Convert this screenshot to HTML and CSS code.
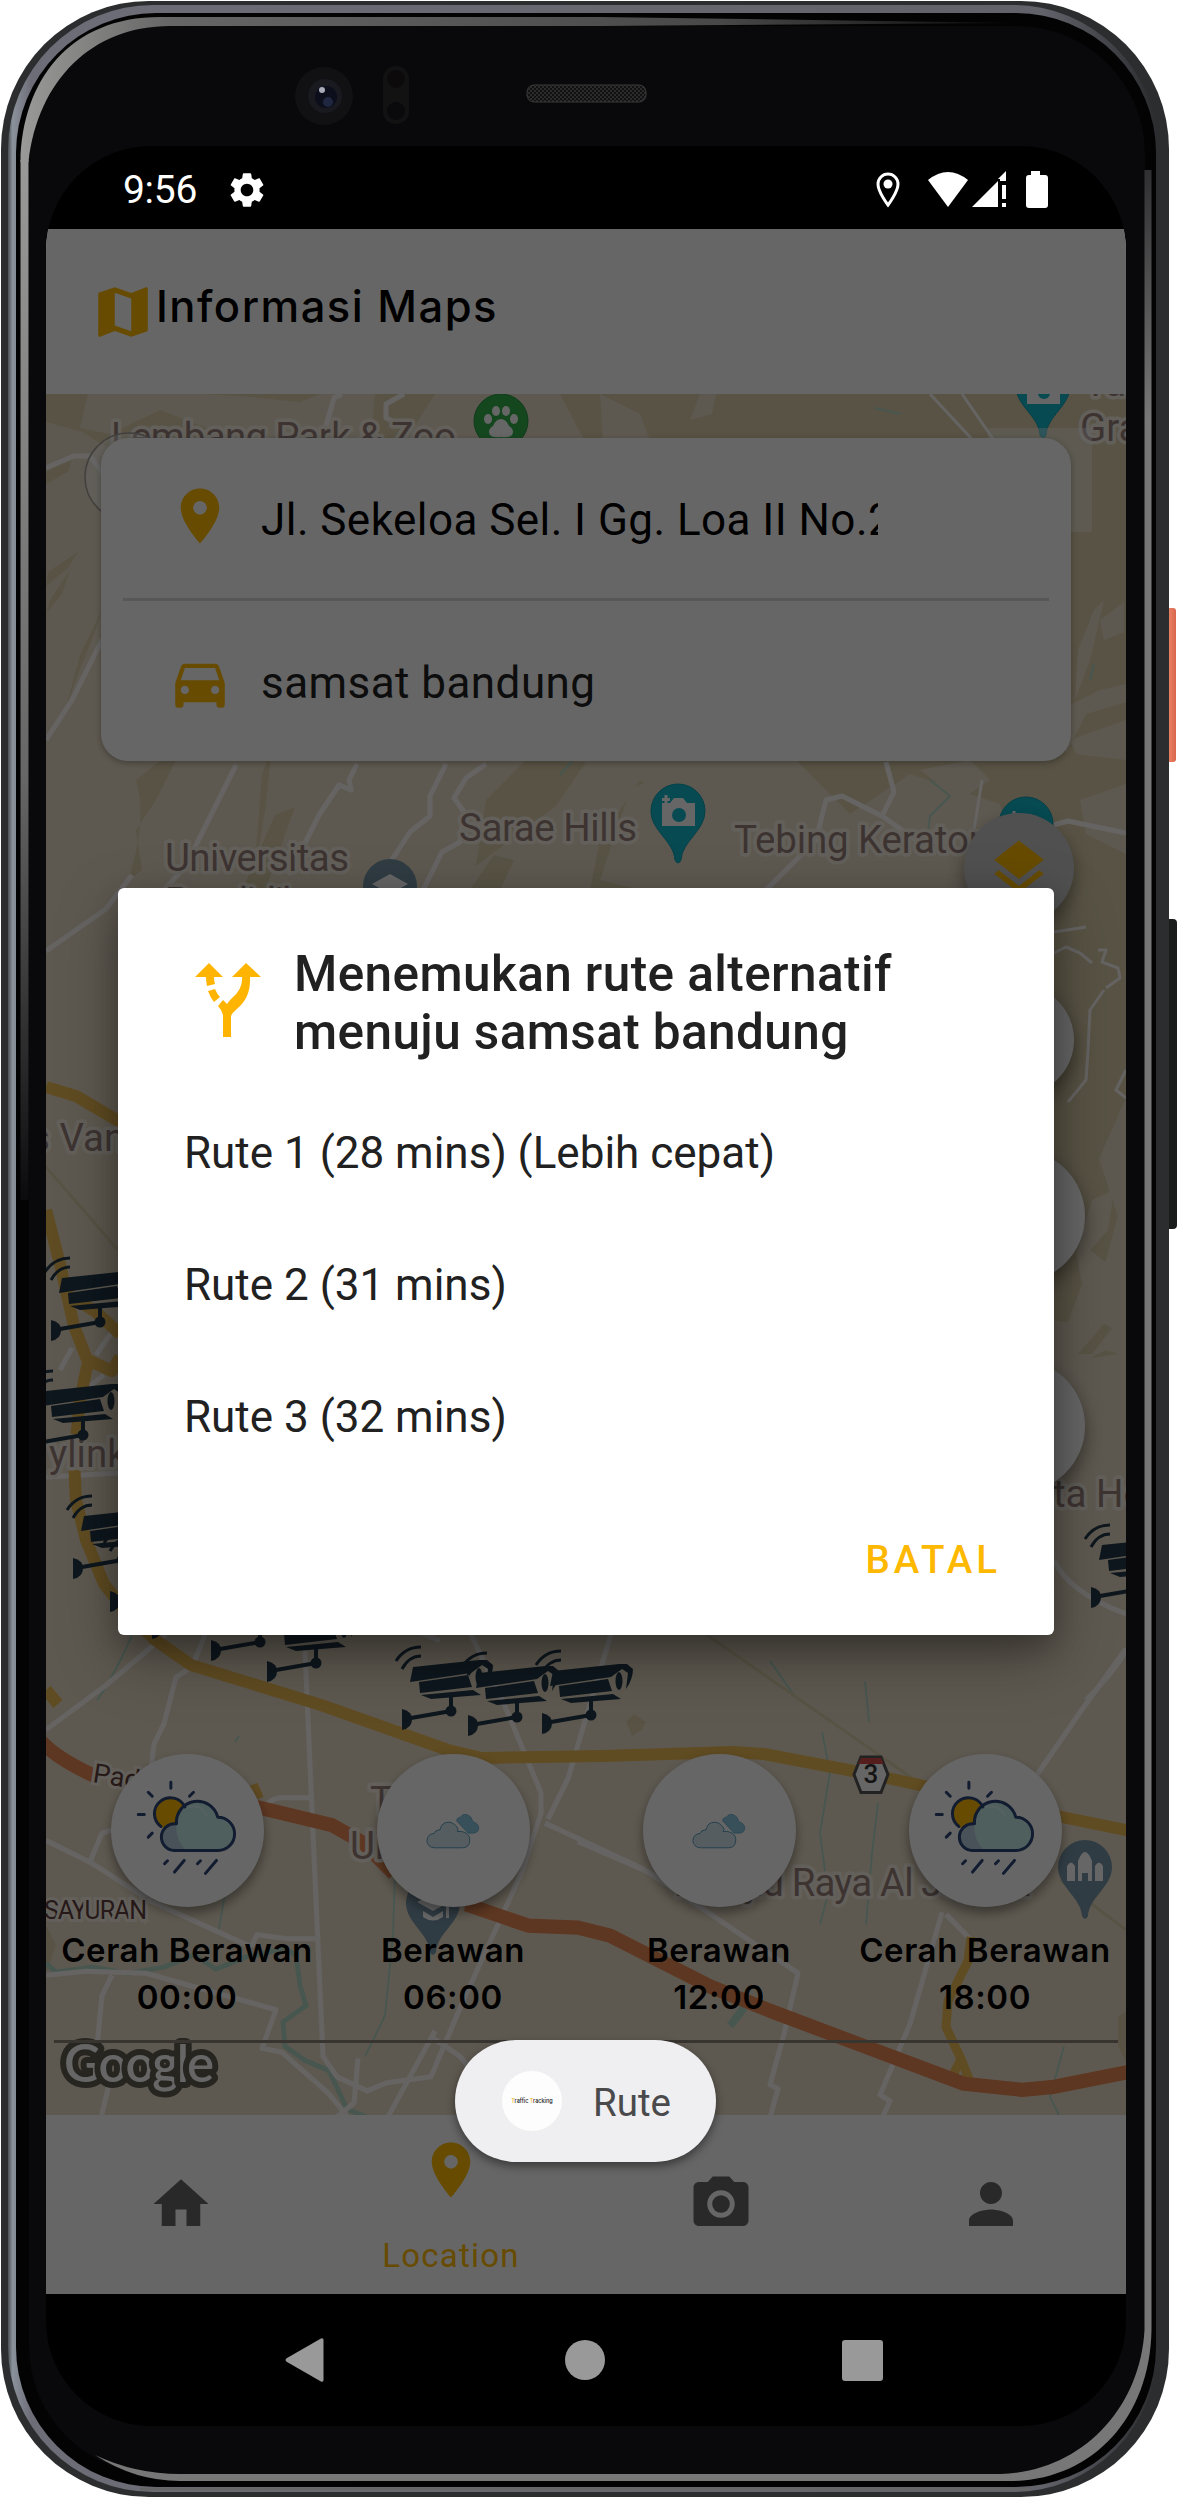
FILE: index.html
```html
<!DOCTYPE html>
<html lang="id">
<head>
<meta charset="utf-8">
<title>Informasi Maps</title>
<link rel="stylesheet" href="styles.css">
</head>
<body>
<svg class="defs" width="0" height="0" aria-hidden="true">
  <symbol id="i-place" viewBox="0 0 24 24"><path d="M12 2C8.13 2 5 5.13 5 9c0 5.25 7 13 7 13s7-7.75 7-13c0-3.87-3.13-7-7-7zm0 9.5a2.5 2.5 0 0 1 0-5 2.5 2.5 0 0 1 0 5z"/></symbol>
  <symbol id="i-car" viewBox="0 0 24 24"><path d="M18.92 6.01C18.72 5.42 18.16 5 17.5 5h-11c-.66 0-1.21.42-1.42 1.01L3 12v8c0 .55.45 1 1 1h1c.55 0 1-.45 1-1v-1h12v1c0 .55.45 1 1 1h1c.55 0 1-.45 1-1v-8l-2.08-5.99zM6.5 16c-.83 0-1.5-.67-1.5-1.5S5.67 13 6.5 13s1.5.67 1.5 1.5S7.330 16 6.500 16zm11 0c-.83 0-1.500-.67-1.500-1.500s.67-1.500 1.500-1.500 1.500.67 1.500 1.500-.67 1.500-1.500 1.500zM5 11l1.500-4.500h11L19 11H5z"/></symbol>
  <symbol id="i-home" viewBox="0 0 24 24"><path d="M10 20v-6h4v6h5v-8h3L12 3 2 12h3v8z"/></symbol>
  <symbol id="i-camera" viewBox="0 0 24 24"><circle cx="12" cy="12" r="3.200"/><path d="M9 2L7.170 4H4c-1.100 0-2 .9-2 2v12c0 1.100.9 2 2 2h16c1.100 0 2-.9 2-2V6c0-1.100-.9-2-2-2h-3.170L15 2H9zm3 15c-2.760 0-5-2.240-5-5s2.240-5 5-5 5 2.240 5 5-2.240 5-5 5z"/></symbol>
  <symbol id="i-person" viewBox="0 0 24 24"><path d="M12 12c2.210 0 4-1.790 4-4s-1.790-4-4-4-4 1.790-4 4 1.790 4 4 4zm0 2c-2.670 0-8 1.340-8 4v2h16v-2c0-2.660-5.330-4-8-4z"/></symbol>
  <symbol id="i-gear" viewBox="0 0 24 24"><path d="M19.140 12.940c.04-.3.06-.61.06-.94 0-.32-.02-.64-.07-.94l2.030-1.580c.18-.14.23-.41.12-.61l-1.920-3.320c-.12-.22-.37-.29-.59-.22l-2.390.96c-.5-.38-1.030-.7-1.620-.94l-.36-2.540c-.04-.24-.24-.41-.48-.41h-3.840c-.24 0-.43.17-.47.41l-.36 2.540c-.59.24-1.130.57-1.620.94l-2.390-.96c-.22-.08-.47 0-.59.22L2.740 8.870c-.12.21-.08.47.12.61l2.030 1.580c-.05.3-.09.63-.09.94s.02.64.07.94l-2.030 1.580c-.18.14-.23.41-.12.61l1.920 3.320c.12.22.37.29.59.22l2.390-.96c.5.38 1.030.7 1.620.94l.36 2.540c.05.24.24.41.48.41h3.840c.24 0 .44-.17.47-.41l.36-2.540c.59-.24 1.130-.56 1.620-.94l2.390.96c.22.08.47 0 .59-.22l1.920-3.320c.12-.22.07-.47-.12-.61l-2.010-1.580zM12 15.600c-1.980 0-3.600-1.620-3.600-3.600s1.620-3.600 3.600-3.600 3.600 1.620 3.600 3.600-1.620 3.600-3.600 3.600z"/></symbol>
  <symbol id="i-map" viewBox="0 0 24 24"><path d="M20.500 3l-.16.03L15 5.100 9 3 3.360 4.900c-.21.07-.36.25-.36.48V20.500c0 .28.22.5.5.5l.16-.03L9 18.900l6 2.100 5.640-1.900c.21-.07.36-.25.36-.48V3.500c0-.28-.22-.5-.5-.5zM15 19l-6-2.110V5l6 2.110V19z"/></symbol>
  <symbol id="i-layers" viewBox="0 0 24 24"><path d="M11.990 18.540l-7.370-5.730L3 14.070l9 7 9-7-1.630-1.270-7.380 5.740zM12 16l7.360-5.730L21 9l-9-7-9 7 1.630 1.270L12 16z"/></symbol>
  <symbol id="i-weather-rain" viewBox="0 0 460 460">
    <g fill="none" stroke="#2d4678" stroke-width="9" stroke-linecap="round"><path d="M180 85v18M112 115l12 12M248 115l-12 12M82 182h18M112 250l12-12"/></g>
    <circle cx="178" cy="179" r="48" fill="#ffbb00"/>
    <path d="M216 150a48 48 0 0 1-52 75q30-8 32-45z" fill="#e0a500"/>
    <path d="M190 290a40 40 0 0 1 3-80h4a63 63 0 0 1 124-20 50 50 0 0 1 1 100z" fill="#c6eeec"/>
    <path d="M190 290a40 40 0 0 1 3-80h3q-2 50 30 80z" fill="#b5cddb"/>
    <path d="M226 162q40-18 64 26M318 190q24 4 35 20" fill="none" stroke="#d6f5f4" stroke-width="6"/>
    <g fill="none" stroke="#2d4678" stroke-width="9" stroke-linecap="round" stroke-linejoin="round">
      <path d="M222 159A48 48 0 1 0 150 218"/>
      <path d="M190 290a40 40 0 0 1 3-80h4a63 63 0 0 1 124-20 50 50 0 0 1 1 100z"/>
      <path d="M161 330l9-9M191 355l29-35M260 330l9-9M284 359l33-39"/>
    </g>
  </symbol>
  <symbol id="i-weather-cloud" viewBox="0 0 460 460">
    <path d="M240 202q-2-10 10-12 10-14 26-5 9 4 12 18 18 6 18 20-2 15-18 15h-14z" fill="#8cc9e2" stroke="#3f90b5" stroke-width="1.500"/>
    <path d="M172 282a22 22 0 0 1-22-22q2-20 22-21 0-9 18-12 4-22 26-22 20 2 28 22l-3 6q12-2 24 3 14 7 14 22 0 24-22 24z" fill="#d8e9f1" stroke="#3f90b5" stroke-width="2.500"/>
  </symbol>
</svg>

<main class="phone">
  <svg class="chassis" viewBox="0 0 1178 2498" aria-hidden="true">
    <defs>
      <linearGradient id="rim" x1="0" x2="1" y1="0" y2="0">
        <stop offset="0" stop-color="#4c5156"/><stop offset=".004" stop-color="#8b929b"/><stop offset=".02" stop-color="#6d6d78"/><stop offset=".9" stop-color="#62626a"/><stop offset="1" stop-color="#2a2c2f"/>
      </linearGradient>
      <linearGradient id="glare" gradientUnits="userSpaceOnUse" x1="20" y1="0" x2="1020" y2="0">
        <stop offset="0" stop-color="#9a9a98"/><stop offset=".15" stop-color="#666"/><stop offset=".7" stop-color="#484848"/><stop offset="1" stop-color="#0a0a0c"/>
      </linearGradient>
      <linearGradient id="glare-side" gradientUnits="userSpaceOnUse" x1="0" y1="150" x2="0" y2="1200">
        <stop offset="0" stop-color="#9a9a98"/><stop offset=".6" stop-color="#666"/><stop offset="1" stop-color="#0b0b0d"/>
      </linearGradient>
      <linearGradient id="glare-right" gradientUnits="userSpaceOnUse" x1="0" y1="150" x2="0" y2="420">
        <stop offset="0" stop-color="#2a2a2c"/><stop offset="1" stop-color="#777"/>
      </linearGradient>
      <linearGradient id="power" x1="0" x2="1"><stop offset="0" stop-color="#d9654b"/><stop offset=".4" stop-color="#f08a6c"/><stop offset="1" stop-color="#d8664c"/></linearGradient>
      <pattern id="mesh" width="4" height="4" patternUnits="userSpaceOnUse"><rect width="4" height="4" fill="#111"/><circle cx="1" cy="1" r="1" fill="#333"/><circle cx="3" cy="3" r="1" fill="#333"/></pattern>
    </defs>
    <rect x="1160" y="608" width="16" height="154" rx="3" fill="url(#power)"/>
    <rect x="1160" y="919" width="17" height="310" rx="4" fill="#1a1b1b"/>
    <rect x="1" y="1" width="1168" height="2496" rx="148" fill="#2b2d2e"/>
    <rect x="8" y="5" width="1150" height="2487" rx="145" fill="url(#rim)"/>
    <rect x="16" y="13" width="1140" height="2474" rx="140" fill="#030304"/>
    <path d="M140 2489H1030" stroke="#666" stroke-width="3" fill="none"/>
    <rect x="29" y="26" width="1116" height="2448" rx="128" fill="#09090b"/>
    <path d="M24.500 1200V160" stroke="url(#glare-side)" stroke-width="8" fill="none"/>
    <path d="M20.500 162C22 80 70 17 160 17H600L1015 23L600 26H170C92 26 38 80 28.500 162z" fill="url(#glare)"/>
    <rect x="1144.500" y="170" width="7" height="2160" fill="url(#glare-right)"/>
    <path d="M1151.500 2330C1150 2420 1090 2481 1010 2481H180Q135 2481 95 2455Q135 2474 180 2474H1000C1080 2472 1140 2410 1144.500 2330z" fill="#777"/>
    <circle cx="324" cy="96" r="29" fill="#111113"/><circle cx="325" cy="96" r="17" fill="#191a20"/><circle cx="326" cy="97" r="11" fill="#0c0e1c"/><circle cx="328" cy="102" r="5" fill="#1f2740"/><circle cx="322" cy="90" r="3" fill="#a9acb9"/>
    <rect x="383" y="66" width="26" height="58" rx="13" fill="#121213"/><circle cx="396" cy="79" r="9" fill="#0c0a0b"/><circle cx="396" cy="111" r="9" fill="#0a0a0c"/>
    <rect x="527" y="85" width="119" height="17" rx="7" fill="url(#mesh)" stroke="#3b3b3b"/>
  </svg>

  <div class="screen">
    <div class="status">
      <span class="clock">9:56</span>
      <svg class="status-gear"><use href="#i-gear"/></svg>
      <svg class="status-icons" viewBox="0 0 176 40" aria-hidden="true">
        <g fill="#fff">
          <path d="M12 4C6.500 4 2 8.500 2 14c0 8 10 21 10 21s10-13 10-21C22 8.500 17.500 4 12 4z" fill="none" stroke="#fff" stroke-width="3"/><circle cx="12" cy="14" r="4.500"/>
          <path d="M52 10Q72-6 92 10L72 37z"/>
          <path d="M96 37L122 11V37zM122 9L130 1V11H124V9z"/><path d="M126 15h4v14h-4zM126 33h4v4h-4z"/>
          <path d="M155 1h9v4h5q3 0 3 3v27q0 3-3 3h-16q-3 0-3-3V8q0-3 3-3h2z"/>
        </g>
      </svg>
    </div>

    <div class="app">
      <header class="appbar">
        <svg class="appbar-icon"><use href="#i-map"/></svg>
        <h1>Informasi Maps</h1>
      </header>

      <section class="map">
        <svg class="map-canvas" viewBox="46 394 1080 1721" aria-hidden="true">
          <defs>
            <g id="cctv">
              <path d="M0-15V0L-40 7" fill="none" stroke="#233a4b" stroke-width="4"/>
              <circle r="5.500"/><path d="M-49-2Q-39 0-39 8.500T-49 19z"/>
              <path d="M-38-44L28-51 36-51 42-46Q42-36 35-26L37-42 31-46 20-38-41-29z"/>
              <path d="M-32-29L17-36 21-24-31-18z"/><path d="M-30-16L22-21 30-16-20-12z"/>
              <ellipse cx="28" cy="-34" rx="3.500" ry="9"/>
              <path d="M-55-50Q-46-64-30-64M-49-42Q-42-55-30-55" fill="none" stroke="#233a4b" stroke-width="3"/>
            </g>
            <path id="pin" d="M0-27A27 27 0 0 0-27 0C-27 20-4 30-3 49Q0 55 3 49C4 30 27 20 27 0A27 27 0 0 0 0-27z"/>
            <g id="shot" fill="#fff"><path d="M-16-8H-8L-4-13H5L9-8H17V15H-16z"/><path d="M-16-13h8v3h-8zM-13.500-16h3v9h-3z"/></g>
          </defs>
          <rect x="46" y="394" width="1080" height="1721" fill="#ebdfc9"/>
          <g fill="#dccfab">
            <path d="M46 394h42l-8 34 30 6 50-24 62 24-20 26-80-4-40-24-36-10zM200 394h120l-20 8-60-6zM375 394h60l-35 55-30 4zM560 394h566v500h-46l-60-20-20-70-90-30-60 40-60-60-130-14 20-150-20-100-60-20z"/>
            <path d="M46 472l26-14-4 14-22 12zM48 572l30-20-10 16-22 18zM50 600l20-30-8 24-16 20zM92 640l10-30-22 45-16 60 12-36zM128 880q20-60 8-100l50-40-30 60-20 30 6 40zM240 895l35-80 20-8-30 84zM262 775l10-30-6 60-12 70zM470 890l24-35 20 5-16 34zM486 800l40-40 60 2-30 44-80 60zM590 890l10-50 40-60 20 20-30 90z"/>
            <path d="M1050 888h76v210l-40 90-32 20zM1054 1200l30-20 14-24 20 60-30 110-34-6zM1078 1354l26-30 8 4-20 26zM1090 1358l16-8 12 4z"/>
            <path d="M626 1722l8-8 12 8-4 8-10 6zM46 1925l10 20-8 24-2 2zM1118 2016l8-4v50l-8-16z"/>
          </g>
          <g fill="#ebdfc9">
            <path d="M600 394l40 20 14 36-50 6zM700 394l-10 26 22-6 4-20zM1078 650l16-40 10-10-14 60-15 40zM1100 620l24-18v30l-20 8zM1060 710l40-20 26-6v18l-40 12-20 40zM1070 740l56-20v40l-50-6zM920 770l50-10 20 20-30 20zM1080 800l46-16v70l-40-20zM600 880l30-90 40-20-20 60-10 60zM800 875l60-60 30 10-20 60z"/>
            <path d="M1092 1200l22-10-6 40-18 20 18 14-14 50-24 40-10-10 22-60-6-30z"/>
          </g>
          <g fill="none" stroke="#b5d8c9" stroke-width="3">
            <path d="M930 780l20 16-20 20-4 30 16 10M560 775l12-14M1090 680l4-16M875 408l25 6" stroke-width="2"/>
            <g transform="translate(0 -22.720) scale(1 1.014200)">
              <path d="M132 1635q-18 40-35 64M235 1740l4-6M770 1660l24 34M865 1680l4 40M822 1730l8 40-10 60 8 60-8 30M878 1800l-6 50-6 70M395 1870l-2 60-8 80-20 40M230 1860l-12 70M1064 2040l-14 50 10 20" stroke-width="2"/>
              <path d="M46 1958l10 9 36-5 36 6 36-6 30-12 22 14 30-12 38-8 12 6 4 30 6 20-23 16 2 24 20 14 24 10 18 38 30 12" stroke-width="5"/>
              <path d="M744 2002l-14 18" stroke-width="8"/>
            </g>
          </g>
          <g fill="none" stroke="#fdfaf8" stroke-width="5" stroke-linejoin="round">
            <path d="M46 468l28-12h16l12 16 14 26M102 640l-30 60-26 40M46 951l60-42 26-34M342 394l-8 4-12 42M404 394l-18 10v14l24 10M236 765l-20 40-30 60-60 70M357 764l-8 16 2 10-12-5-20 30-30 60M446 764l-16 32v20l-20 16-26 40 4 14-20 28M486 764l-20 14-12 20 10 14-4 30-18 10-20 40"/>
            <path d="M886 762l8 30-12 24-40-20-16 4-10 40-30 30-20 20M882 816l34 24 20 4M1018 835l50-14 58 12"/>
            <path d="M930 394l52 56M962 394l36 52M982 780l-8 50" stroke-width="3"/>
            <g transform="translate(0 -22.720) scale(1 1.014200)">
              <path d="M46 1728l60-44 60-50M206 1632l-14 34-16 10-12 46-10 20-6 50M46 1837l45 22 60 38 100 45M312 1795h-30q-14 0-24 18M138 1818l-36 12-12 28M251 1942l6-12 30 4h30M305 1650l8 180 10 220 14 20 30 14 20-8 44-6 30-70 60-130 20-60v-20l-38-90-38-78-22-4-20-12"/>
              <path d="M545 1820l100 46M548 1816l20-40 30-100 28-90 20-30M46 1970l40-4 60 2 130 36-14 38 20 4 46 40 20 24-28 40M358 2052l-4 44-20 16M435 2025l-50 90M430 2030l30 20 20 24M112 1970l-10 20-6 60 14 24-10 40M440 1640l-20-8-60-14"/>
              <path d="M578 1838l70 30 60 40 90 60-14 60-14 50 8 4-10 36M1126 1648l-44 60-56 80-10 20M942 1908l-32 110-30 70 10 6-14 30M946 1910l24 24"/>
            </g>
            <path d="M1054 1560q14 32 72 54M1126 1650q-10 20-40 50M78 1395l26-20M46 1477l72-4M96 1355l18-26M60 1370l12-22"/>
            <path d="M1054 932l32-5M1054 953l12-6 14 6 12 10M1098 950h8l-4 12 16 6 2 10-14 10M1104 990l-14 20-2 40-2 30-18 22M1126 1070l-10 20 10 8" stroke-width="3"/>
          </g>
          <path d="M118 1250L40 1160M700 1630l222 155M1060 1880l66 50" fill="none" stroke="#ddd2ac" stroke-width="3"/>
          <g fill="none" stroke-linejoin="round">
            <g stroke="#f0bd55" stroke-width="12">
              <path d="M46 1087l30 9 44 26M46 1210l14 54 14 62 14 36-8 38-6 60 2 40 10 40 18 44 24 30 26 25 37 26 130 40 127 45 34 8 120-2 131-4 31 2 100 19 60 13 138 31 68 14M70 1296l26 16 24 22M88 1360l24 11 8-14M46 1690l12 14M252 1785l6 14"/>
              <path d="M971 1937l-3 24-20 40-2 26 15 32-9 18M961 2059l8 20" stroke-width="9"/>
            </g>
            <path transform="translate(0 -22.720) scale(1 1.014200)" d="M40 1738q15 18 60 38M200 1795l56 9 76 18 32 18 30 30M466 1900l62 21 50 2 32 8 100 50 60 24 194 72 58 6 32-3 76-15" stroke="#e98a55" stroke-width="14"/>
          </g>
          <g class="poi">
            <text x="111" y="450" textLength="345">Lembang Park &amp; Zoo</text>
            <text x="165" y="871" textLength="184">Universitas</text>
            <text x="165" y="915" textLength="176">Pendidikan</text>
            <text x="459" y="841" textLength="178">Sarae Hills</text>
            <text x="734" y="853" textLength="256">Tebing Keraton</text>
            <text x="1084" y="396">Tama</text>
            <text x="1080" y="441">Grafika</text>
            <text x="30" y="1151">s Vanda</text>
            <text x="49" y="1467">ylink</text>
            <text x="1053" y="1507">ta Hotel</text>
            <text x="370" y="1814">Telkom</text>
            <text x="350" y="1859">University</text>
            <text x="674" y="1896" textLength="362">Masjid Raya Al Jabbar</text>
          </g>
          <g class="area"><text x="44" y="1919" textLength="103">SAYURAN</text><text x="92" y="1782" transform="rotate(9 92 1782)" font-size="27">Pad</text></g>
          <g fill="#12b9cd" stroke="#0c9fb4" stroke-width="1">
            <use href="#pin" x="678" y="811"/><use href="#pin" x="1043" y="386"/><use href="#pin" x="1026" y="824"/>
          </g>
          <use href="#shot" x="678" y="811"/><circle cx="679" cy="815" r="7" fill="#12b9cd"/>
          <use href="#shot" x="1043" y="389"/><circle cx="1044" cy="393" r="6" fill="#12b9cd"/>
          <use href="#shot" x="1026" y="827"/>
          <circle cx="501" cy="421" r="27" fill="#35b24e" stroke="#239240"/>
          <g fill="#fff"><ellipse cx="488" cy="419" rx="4" ry="5"/><ellipse cx="496" cy="411" rx="4" ry="5"/><ellipse cx="506" cy="411" rx="4" ry="5"/><ellipse cx="514" cy="419" rx="4" ry="5"/><path d="M501 419q5 0 8 7 6 4 3 9-3 3-11 2-8 1-11-2-3-5 3-9 3-7 8-7z"/></g>
          <g fill="#7896a8"><use href="#pin" x="390" y="886"/><use href="#pin" x="433" y="1903"/><use href="#pin" x="1085" y="1867"/></g>
          <g fill="#fff"><path d="M390 874l18 10-18 10-18-10zM433 1894l16 8-16 9-16-9z"/><path d="M423 1911l10 6 10-6v6q-10 7-20 0zM446 1902h3v16h-3z"/>
          <path d="M1067 1881v-15q4-7 8 0v15zM1095 1881v-15q4-7 8 0v15zM1078 1881v-20q7-18 14 0v20h-4v-8h-6v8z"/></g>
          <path d="M861 1757h20l7 17.500-7 18h-20l-7-18z" fill="#fff" stroke="#555" stroke-width="3"/><path d="M861 1758h20l3 6h-26z" fill="#d84a4a"/>
          <text x="871" y="1783" class="shield">3</text>
          <g fill="#233a4b">
            <use href="#cctv" x="100" y="1322"/><use href="#cctv" x="83" y="1435"/><use href="#cctv" x="122" y="1560"/><use href="#cctv" x="159" y="1593"/><use href="#cctv" x="201" y="1620"/><use href="#cctv" x="260" y="1642"/><use href="#cctv" x="316" y="1663"/><use href="#cctv" x="451" y="1711"/><use href="#cctv" x="517" y="1717"/><use href="#cctv" x="591" y="1715"/><use href="#cctv" x="1140" y="1589"/>
          </g>
          <circle cx="129" cy="477" r="44" fill="#fff" fill-opacity=".4" stroke="#a5a29b" stroke-width="1.500"/>
          <rect x="988" y="428" width="104" height="104" rx="3" fill="#fff" fill-opacity=".4"/>
          <text x="64" y="2082" textLength="150" class="brand">Google</text>
        </svg>

        <div class="fabs">
          <span class="fab fab-grey"><svg><use href="#i-layers"/></svg></span>
          <span class="fab"></span>
          <span class="fab fab-lg"></span>
          <span class="fab fab-lg fab-last"></span>
        </div>

        <div class="search">
          <div class="search-row"><svg><use href="#i-place"/></svg><span class="search-text">Jl. Sekeloa Sel. I Gg. Loa II No.23</span></div>
          <div class="search-row search-row-to"><svg><use href="#i-car"/></svg><span class="search-text search-text-to">samsat bandung</span></div>
        </div>

        <div class="weather">
          <div class="hour"><span class="disc"><svg><use href="#i-weather-rain"/></svg></span><span>Cerah Berawan</span><span>00:00</span></div>
          <div class="hour"><span class="disc"><svg><use href="#i-weather-cloud"/></svg></span><span>Berawan</span><span>06:00</span></div>
          <div class="hour"><span class="disc"><svg><use href="#i-weather-cloud"/></svg></span><span>Berawan</span><span>12:00</span></div>
          <div class="hour"><span class="disc"><svg><use href="#i-weather-rain"/></svg></span><span>Cerah Berawan</span><span>18:00</span></div>
        </div>
      </section>

      <nav class="tabs">
        <span class="tab"><svg><use href="#i-home"/></svg></span>
        <span class="tab tab-active"><svg><use href="#i-place"/></svg><span>Location</span></span>
        <span class="tab"><svg><use href="#i-camera"/></svg></span>
        <span class="tab"><svg><use href="#i-person"/></svg></span>
      </nav>

      <div class="scrim">
        <section class="dialog">
          <div class="dialog-head">
            <svg class="dialog-icon" viewBox="0 0 66 74" aria-hidden="true">
              <path d="M0 14L14 0l14 14h-9q0 4 1 7l-8 2q-1-5-1-9zM37 14L51 0l15 14H55q1 20-12 31-6 5-7 8v21h-8V52q-1-5-5-9l5-6 4 4q2-3 5-6 11-9 10-21zM13 28l7-2q2 5 5 8l-6 5q-4-5-6-11z" fill="#ffb400"/>
            </svg>
            <h2>Menemukan rute alternatif<br>menuju samsat bandung</h2>
          </div>
          <ul class="routes">
            <li>Rute 1 (28 mins) (Lebih cepat)</li>
            <li>Rute 2 (31 mins)</li>
            <li>Rute 3 (32 mins)</li>
          </ul>
          <button class="cancel">BATAL</button>
        </section>
      </div>

      <div class="toast">
        <span class="toast-logo"><span><i>T</i>raffic <i>T</i>racking</span></span>
        <span class="toast-text">Rute</span>
      </div>
    </div>

    <div class="sysnav">
      <svg viewBox="0 0 39 46" width="39" height="46"><path d="M36 1.500q2.500-1 2.500 1.500v40q0 2.500-2.500 1.500L2 25q-3-2 0-4z"/></svg>
      <span class="sys-home"></span>
      <span class="sys-recent"></span>
    </div>
  </div>
</main>
</body>
</html>
```
FILE: styles.css
```css
* { box-sizing: border-box; }
body { margin: 0; background: #fff; font-family: Roboto, sans-serif; }
.defs { position: absolute; }
h1, h2, ul { margin: 0; padding: 0; font-weight: inherit; }

.phone { position: relative; width: 1178px; height: 2498px; padding: 146px 52px 72px 46px; overflow: hidden; }
.chassis { position: absolute; inset: 0; width: 1178px; height: 2498px; }
.screen { position: relative; display: flex; flex-direction: column; width: 1080px; height: 2280px; background: #000; border-radius: 105px; overflow: hidden; }

.status { display: flex; align-items: center; height: 83px; padding: 4px 74px 0 77px; color: #fff; }
.clock { font-size: 39px; line-height: 46px; letter-spacing: -.3px; }
.status-gear { width: 42px; height: 42px; margin-left: 29px; fill: #fff; }
.status-icons { width: 176px; height: 40px; margin-left: auto; }

.app { position: relative; display: flex; flex-direction: column; height: 2065px; background: #fff; }
.appbar { display: flex; align-items: center; height: 165px; padding-left: 44px; }
.appbar-icon { width: 66px; height: 66px; fill: #fb0; }
.appbar h1 { margin: -12px 0 0 0; font: 500 43.500px/60px Inter, sans-serif; letter-spacing: 1.500px; color: #000; white-space: nowrap; }

.map { position: relative; display: flex; flex-direction: column; justify-content: space-between; height: 1721px; }
.map-canvas { position: absolute; inset: 0; width: 1080px; height: 1721px; }
.poi { font: 38.5px Roboto, sans-serif; fill: #98827d; stroke: #f8f1e4; stroke-width: 7px; stroke-linejoin: round; paint-order: stroke; }
.area { font: 25px Roboto, sans-serif; fill: #5f403c; stroke: #f8f1e4; stroke-width: 6px; paint-order: stroke; }
.shield { font: 500 26px Roboto, sans-serif; text-anchor: middle; fill: #333; }
.brand { font: 600 51px Lato, sans-serif; fill: #fff; stroke: #5f5c4e; stroke-width: 12px; stroke-linejoin: round; paint-order: stroke; }

.fabs { position: absolute; top: 419px; left: 907px; display: flex; flex-direction: column; align-items: center; gap: 62px; width: 132px; }
.fab { display: grid; place-items: center; width: 110px; height: 110px; border-radius: 50%; background: #fff; box-shadow: 0 8px 18px rgba(0,0,0,.4); }
.fab svg { width: 66px; height: 66px; fill: #fb0; }
.fab-grey { background: #c8c8c8; }
.fab-lg { width: 132px; height: 132px; margin-top: -7px; }
.fab-last { margin-top: 16px; }

.search { position: relative; height: 323px; margin: 44px 55px 0; padding: 0 22px; border-radius: 27px; background: #fff; box-shadow: 0 2px 7px rgba(0,0,0,.3); }
.search-row { display: flex; align-items: center; height: 163px; padding: 0 0 4px 44px; border-bottom: 3px solid #dadada; }
.search-row svg { flex: none; width: 66px; height: 66px; fill: #fb0; }
.search-row-to { height: 160px; padding: 4px 0 0 44px; border: 0; }
.search-text { width: 617px; margin: 8px 0 0 28px; overflow: hidden; font-size: 44px; line-height: 60px; letter-spacing: .45px; white-space: nowrap; color: #000; }
.search-text-to { margin-top: 0; color: #222; }

.weather { position: relative; display: grid; grid-template-columns: repeat(4, 1fr); height: 289px; margin: 0 8px 72px; border-bottom: 3px solid #8c867c; }
.hour { display: flex; flex-direction: column; align-items: center; font: 600 33px/47px Inter, sans-serif; letter-spacing: .6px; white-space: nowrap; }
.disc { width: 153px; height: 153px; margin-bottom: 20px; border-radius: 50%; background: #fff; box-shadow: 0 6px 12px rgba(0,0,0,.4); }
.disc svg { display: block; width: 153px; height: 153px; }

.tabs { display: grid; grid-template-columns: repeat(4, 1fr); height: 179px; background: #fff; }
.tab { display: flex; flex-direction: column; align-items: center; padding-top: 56px; font-size: 33px; line-height: 40px; letter-spacing: 1.200px; fill: #666; }
.tab svg { width: 66px; height: 66px; }
.tab-active { padding-top: 22px; color: #fb0; fill: #fb0; }
.tab-active span { margin-top: 33px; }

.scrim { position: absolute; inset: 0; padding: 659px 72px 0; background: rgba(0,0,0,.6); }
.dialog { display: flex; flex-direction: column; height: 747px; padding: 57px 53px 0 66px; border-radius: 6px; background: #fff; box-shadow: 0 22px 60px rgba(0,0,0,.34), 0 10px 26px rgba(0,0,0,.2); color: #212121; }
.dialog-head { display: flex; }
.dialog-icon { flex: none; width: 66px; height: 74px; margin: 18px 33px 0 11px; }
.dialog h2 { font-size: 49.500px; line-height: 58px; font-weight: 500; letter-spacing: .4px; white-space: nowrap; }
.routes { margin-top: 26px; list-style: none; font-size: 44px; line-height: 132px; }
.cancel { align-self: flex-end; margin-top: 47px; padding: 0; border: 0; background: none; font: 500 38.500px/60px Roboto, sans-serif; letter-spacing: 4px; color: #ffb800; }

.toast { position: absolute; top: 1811px; left: 409px; display: flex; align-items: center; gap: 31px; width: 261px; height: 122px; padding-left: 47px; border-radius: 61px; background: #efeff1; box-shadow: 0 4px 10px rgba(0,0,0,.45); }
.toast-logo { display: grid; place-items: center; width: 60px; height: 60px; border-radius: 50%; background: #fdfdfd; font: 500 5.500px/8px Inter, sans-serif; color: #222; white-space: nowrap; }
.toast-logo i { font-style: normal; color: #f5b324; }
.toast-text { margin-top: 3px; font-size: 38.500px; line-height: 46px; color: #4a4a4c; }

.sysnav { display: flex; align-items: center; height: 132px; padding-left: 239px; }
.sysnav svg { fill: #999; }
.sys-home { width: 40px; height: 40px; margin-left: 241px; border-radius: 50%; background: #999; }
.sys-recent { width: 41px; height: 41px; margin-left: 237px; border-radius: 3px; background: #999; }
```
